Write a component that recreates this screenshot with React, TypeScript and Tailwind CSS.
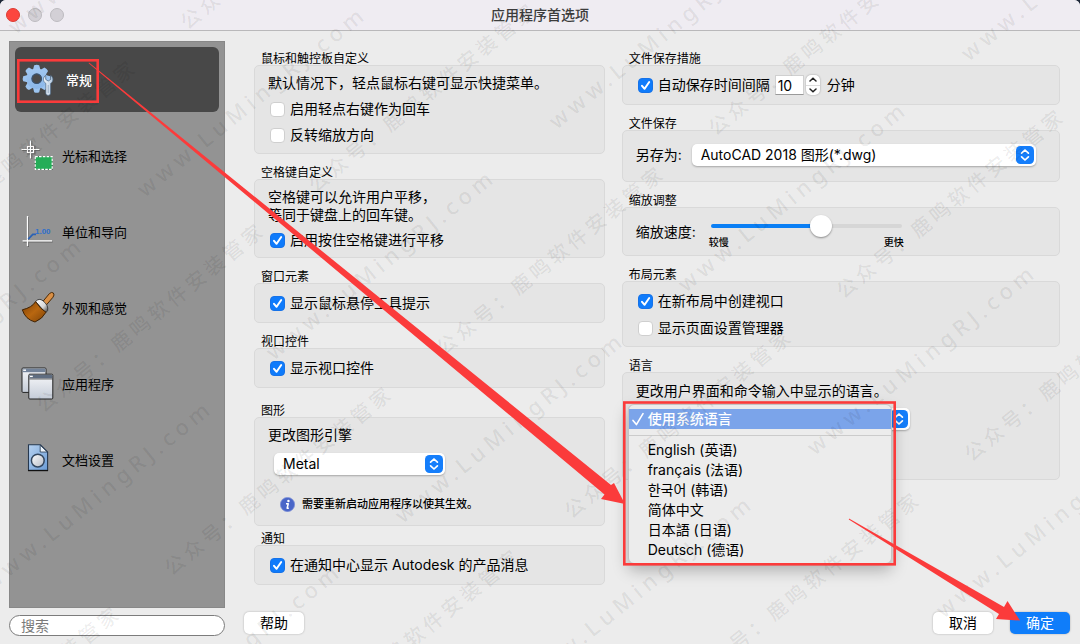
import type { ReactNode } from "react";
import { useId } from "react";

/* ---------- icons ---------- */

function GearIcon() {
  const teeth = [0, 45, 90, 135, 180, 225, 270, 315];
  return (
    <svg viewBox="0 0 32 32" className="size-8 shrink-0" aria-hidden="true">
      <defs>
        <linearGradient id="gear" x1="0" y1="0" x2="0" y2="32" gradientUnits="userSpaceOnUse">
          <stop offset="0" stopColor="#a6cbf3" />
          <stop offset="1" stopColor="#83b1e6" />
        </linearGradient>
        <linearGradient id="wrench" x1="0" y1="0" x2="1" y2="0">
          <stop offset="0" stopColor="#f2f7fc" />
          <stop offset="1" stopColor="#b4c9df" />
        </linearGradient>
      </defs>
      {teeth.map((a) => (
        <path key={a} d="M10.8 6.6 L12.2 1.2 Q14.7 .2 17.2 1.2 L18.6 6.6 Z" fill="#9cc4f0" transform={`rotate(${a} 14.7 14.7)`} />
      ))}
      <circle cx="14.7" cy="14.7" r="7.6" fill="none" stroke="url(#gear)" strokeWidth="5.4" />
      <circle cx="14.7" cy="14.7" r="4.8" fill="#4a4a4a" stroke="#3b5573" strokeWidth="1.2" />
      <path
        d="M23.7 11.4 V15.4 L26.2 17 L28.7 15.4 V11.4 C31.5 13 31.8 17.6 28.6 19.4 V29.3 Q28.6 31.4 26.2 31.4 Q23.8 31.4 23.8 29.3 V19.4 C20.6 17.6 20.9 13 23.7 11.4 Z"
        fill="url(#wrench)"
        stroke="#4b6683"
        strokeWidth=".7"
      />
      <path d="M26.2 21 V29" stroke="#8ea6c0" strokeWidth=".9" />
    </svg>
  );
}

function CursorIcon() {
  return (
    <svg viewBox="0 0 32 32" className="size-8 shrink-0 overflow-visible" aria-hidden="true">
      <path d="M9.2 .8 V19 M.2 10 H18.2 M6 6.8 H12.4 V13.4 H6 Z" fill="none" stroke="#333" strokeWidth="2.2" opacity=".4" />
      <path d="M8.5 .5 V18.5 M-.5 9.5 H17.5" fill="none" stroke="#fff" strokeWidth="1.2" />
      <rect x="5.5" y="6.5" width="6" height="6" fill="none" stroke="#fff" strokeWidth="1.2" />
      <rect x="12.6" y="16" width="18.2" height="14" fill="#222" opacity=".5" />
      <rect x="13.2" y="16.6" width="17" height="12.8" fill="#25ad58" stroke="#fff" strokeWidth="1.2" strokeDasharray="2.6 1.2" />
    </svg>
  );
}

function UnitsIcon() {
  return (
    <svg viewBox="0 0 32 32" className="size-8 shrink-0" aria-hidden="true">
      <path d="M6.5 1 V31 M1.4 26 H30.6" stroke="#444" strokeWidth="1" opacity=".6" />
      <path d="M5.5 0 V30 M.6 24.8 H30" stroke="#fff" strokeWidth="1.3" />
      <path d="M6.2 23.2 L10.8 18.3 H14" fill="none" stroke="#2c62b4" strokeWidth="1.7" />
      <text x="13" y="18.2" fontSize="8" fontWeight="700" fill="#2f6fcb" fontFamily="'Liberation Sans', sans-serif">
        1.00
      </text>
    </svg>
  );
}

function BrushIcon() {
  return (
    <svg viewBox="0 0 32 32" className="size-8 shrink-0 overflow-visible" aria-hidden="true">
      <defs>
        <linearGradient id="bristle" x1="0" y1="0" x2="1" y2="1">
          <stop offset="0" stopColor="#7a3f06" />
          <stop offset=".5" stopColor="#b96710" />
          <stop offset="1" stopColor="#7e4307" />
        </linearGradient>
        <linearGradient id="ferrule" x1="0" y1="0" x2="1" y2="1">
          <stop offset="0" stopColor="#fff" />
          <stop offset=".6" stopColor="#d6d6d6" />
          <stop offset="1" stopColor="#333" />
        </linearGradient>
      </defs>
      <path d="M20 10.5 L27.4 1.6 Q29.6 -.4 31.4 1 Q32.8 2.8 31 5.2 L23.8 13.6 Z" fill="#d98f45" stroke="#4a2a08" strokeWidth="1" />
      <path d="M13.6 9.6 Q17 5.6 21 8.8 Q26.8 13.4 25.6 18.6 L23.6 20.8 Z" fill="url(#ferrule)" stroke="#333" strokeWidth=".9" />
      <path d="M13.6 9.6 Q10 15.6 .3 17.8 Q3.4 27.4 13 30 Q20.4 27 24 20.2 Q18.6 17.4 13.6 9.6 Z" fill="url(#bristle)" stroke="#3f2204" strokeWidth="1" />
    </svg>
  );
}

function WindowsIcon() {
  return (
    <svg viewBox="0 0 32 32" className="size-8 shrink-0 overflow-visible" aria-hidden="true">
      <defs>
        <linearGradient id="pane" x1="0" y1="0" x2="0" y2="1">
          <stop offset="0" stopColor="#f6f7f9" />
          <stop offset="1" stopColor="#c5ccd8" />
        </linearGradient>
      </defs>
      <rect x="0" y="0" width="24" height="24.4" rx="1" fill="url(#pane)" stroke="#222" />
      <rect x=".6" y=".6" width="22.8" height="3.6" fill="#73839a" />
      <path d="M1.2 2.2 H4" stroke="#fff" strokeWidth="1.4" />
      <rect x="6.8" y="6.2" width="24" height="24.8" rx="1" fill="url(#pane)" stroke="#222" />
      <rect x="7.4" y="6.8" width="22.8" height="3.6" fill="#5f6d81" />
      <path d="M8 8.4 H10.8" stroke="#fff" strokeWidth="1.4" />
      <path d="M7.3 11 H30.3" stroke="#333" strokeWidth=".7" />
    </svg>
  );
}

function DocumentIcon() {
  return (
    <svg viewBox="0 0 32 32" className="size-8 shrink-0" aria-hidden="true">
      <defs>
        <linearGradient id="sheet" x1="0" y1="0" x2="1" y2="1">
          <stop offset="0" stopColor="#b7d2f0" />
          <stop offset="1" stopColor="#6b9cd6" />
        </linearGradient>
        <linearGradient id="disc" x1="0" y1="0" x2="1" y2="1">
          <stop offset="0" stopColor="#fff" />
          <stop offset="1" stopColor="#b4bac4" />
        </linearGradient>
      </defs>
      <path d="M6.5 .8 H18.4 L25.6 8 V26.4 H6.5 Z" fill="url(#sheet)" stroke="#26384f" strokeWidth="1.1" />
      <path d="M18.2 1.2 V8 H25.2 Z" fill="#eef5fc" stroke="#26384f" strokeWidth=".8" />
      <path d="M6 26.6 H26" stroke="#111" strokeWidth="1.2" />
      <circle cx="15.8" cy="16.6" r="6.4" fill="url(#disc)" stroke="#33475f" strokeWidth="1.5" />
    </svg>
  );
}

/* ---------- controls ---------- */

function Check({ label, checked = false }: { label: string; checked?: boolean }) {
  const id = useId();
  return (
    <div className="flex h-[18px] items-center gap-[5px] pl-0.5">
      <span className="grid shrink-0">
        <input
          id={id}
          type="checkbox"
          defaultChecked={checked}
          className="peer size-[15px] appearance-none rounded-[4px] border border-[#cfcfcf] bg-white [grid-area:1/1] checked:border-[#1672e8] checked:bg-[#0f7bfb]"
        />
        <svg viewBox="0 0 15 15" className="pointer-events-none hidden size-[15px] [grid-area:1/1] peer-checked:block" aria-hidden="true">
          <path d="M4 7.8 L6.6 10.8 L11.2 4" fill="none" stroke="#fff" strokeWidth="2" strokeLinecap="round" strokeLinejoin="round" />
        </svg>
      </span>
      <label htmlFor={id} className="whitespace-nowrap">
        {label}
      </label>
    </div>
  );
}

function Picker({ label, options, className = "" }: { label: string; options: string[]; className?: string }) {
  return (
    <span className={`grid h-[22px] ${className}`}>
      <select
        aria-label={label}
        className="h-[22px] w-full min-w-0 appearance-none rounded-[5px] bg-white pr-6 pl-[9px] leading-[22px] text-black shadow-[0_1px_2px_rgba(0,0,0,0.28)] [grid-area:1/1]"
      >
        {options.map((o) => (
          <option key={o}>{o}</option>
        ))}
      </select>
      <svg viewBox="0 0 18 18" className="pointer-events-none mr-0.5 size-[18px] self-center justify-self-end [grid-area:1/1]" aria-hidden="true">
        <rect width="18" height="18" rx="4.5" fill="#157efb" />
        <path d="M5.6 7.2 L9 4 L12.4 7.2 M5.6 10.8 L9 14 L12.4 10.8" fill="none" stroke="#fff" strokeWidth="1.7" strokeLinecap="round" strokeLinejoin="round" />
      </svg>
    </span>
  );
}

function Group({ title, className = "", bodyClass, children }: { title: string; className?: string; bodyClass: string; children: ReactNode }) {
  return (
    <section className={className}>
      <h2 className="h-3.5 pl-[7px] text-xs leading-4">{title}</h2>
      <div className={`rounded-[5px] border border-[#d9d9d9] bg-[#e5e5e5] px-[13px] leading-[18px] ${bodyClass}`}>{children}</div>
    </section>
  );
}

/* ---------- sidebar ---------- */

const sections = [
  { name: "常规", icon: <GearIcon />, active: true },
  { name: "光标和选择", icon: <CursorIcon /> },
  { name: "单位和导向", icon: <UnitsIcon /> },
  { name: "外观和感觉", icon: <BrushIcon /> },
  { name: "应用程序", icon: <WindowsIcon /> },
  { name: "文档设置", icon: <DocumentIcon /> },
];

function Sidebar() {
  return (
    <aside className="flex w-54 shrink-0 flex-col gap-[7px] pt-2.5 pb-2">
      <nav className="flex flex-1 flex-col gap-[11px] border border-[#888] bg-[#939393] px-[5px] py-[5px]">
        {sections.map((s) => (
          <button
            key={s.name}
            type="button"
            className={`flex h-[65px] items-center gap-2 rounded-md pl-[7px] text-[13px] ${s.active ? "bg-[#484848] font-medium text-white" : "text-black"}`}
          >
            {s.icon}
            <span className={s.active ? "pt-0.5 pl-1" : "pt-0.5"}>{s.name}</span>
          </button>
        ))}
      </nav>
      <input
        type="search"
        aria-label="搜索"
        placeholder="搜索"
        className="h-[21px] w-full rounded-full border border-[#7c7c7c] bg-white px-[11px] text-sm leading-[19px] placeholder:text-[#7a7a7a]"
      />
    </aside>
  );
}

/* ---------- language menu ---------- */

const languages = ["English (英语)", "français (法语)", "한국어 (韩语)", "简体中文", "日本語 (日语)", "Deutsch (德语)"];

function LanguageMenu() {
  return (
    <div className="absolute -top-1 -left-2 w-[264px] rounded-md border border-[#c4c4c4] bg-[#ececec] pt-1 pb-[3px] shadow-[0_6px_16px_rgba(0,0,0,0.28)]">
      <button type="button" className="flex h-5 w-full items-center gap-1 bg-[#7ba4ea] pl-[3px] font-medium text-white">
        <svg viewBox="0 0 12 14" className="h-3.5 w-3 shrink-0" aria-hidden="true">
          <path d="M1 8.4 L4.4 12.6 L11 1.6" fill="none" stroke="#fff" strokeWidth="1.6" strokeLinecap="round" strokeLinejoin="round" />
        </svg>
        使用系统语言
      </button>
      <hr className="mt-1.5 mb-1 border-[#cbcbcb]" />
      {languages.map((l) => (
        <button key={l} type="button" className="block h-5 w-full pl-[19px] text-left leading-5">
          {l}
        </button>
      ))}
    </div>
  );
}

/* ---------- overlays ---------- */

// Start points of the repeated diagonal marks; each mark climbs up and to the right.
function lattice(x: number, y: number, ax: number, ay: number, bx: number, by: number) {
  const points: { x: number; y: number }[] = [];
  for (let m = -5; m <= 7; m++) {
    for (let n = -4; n <= 5; n++) {
      const px = x + m * ax + n * bx;
      const py = y + m * ay + n * by;
      const inRange = px > -215 && px < 1075 && py > 0 && py < 820;
      const yAtLeftEdge = py + px * 0.8;
      const xAtBottom = px + (py - 644) * 1.24;
      const missesLeft = px < 0 && (yAtLeftEdge < 5 || yAtLeftEdge > 1500);
      const missesBottom = py > 644 && (xAtBottom > 1080 || xAtBottom > px + 210);
      if (inRange && !missesLeft && !missesBottom) points.push({ x: px, y: py });
    }
  }
  return points;
}

const accountMarks = lattice(311, 188, 128, 163, 272, -220);
const siteMarks = lattice(551, 123, 129, 163, 283, -231);

function Watermark() {
  return (
    <div aria-hidden="true" className="pointer-events-none absolute inset-0 overflow-hidden text-black/8 select-none">
      {accountMarks.map((p) => (
        <span
          key={`${p.x},${p.y}`}
          className="absolute -mt-2.5 origin-left -rotate-39 text-xl leading-5 font-medium tracking-[4px] whitespace-nowrap"
          style={{ left: p.x, top: p.y }}
        >
          公众号：鹿鸣软件安装管家
        </span>
      ))}
      {siteMarks.map((p) => (
        <span
          key={`${p.x},${p.y}`}
          className="absolute -mt-2.5 origin-left -rotate-39 font-['Noto_Sans',sans-serif] text-[22px] leading-5 font-medium tracking-[5px] whitespace-nowrap"
          style={{ left: p.x, top: p.y }}
        >
          www.LuMingRJ.com
        </span>
      ))}
    </div>
  );
}

function Annotations() {
  return (
    <svg width="1080" height="644" viewBox="0 0 1080 644" className="pointer-events-none absolute top-0 left-0" aria-hidden="true">
      <g fill="none" stroke="#fb3b3b" strokeWidth="2.6">
        <rect x="18.3" y="60.3" width="79.4" height="41.4" />
        <rect x="624.3" y="402.5" width="270.4" height="161.8" />
      </g>
      <g fill="#fb3b3b">
        <path d="M89 62.5 L611 485 L614 483 L625 504 L601 499 L604.5 494.5 L88.6 63.2 Z" />
        <path d="M849 518.6 L1004 607 L1007.5 601 L1020 620.5 L996 619 L999 614 L848.8 519.6 Z" />
      </g>
    </svg>
  );
}

/* ---------- window ---------- */

export default function App() {
  return (
    <div className="bg-[#1d2738] font-['Inter','Noto_Sans_CJK_SC','Noto_Sans_CJK_KR',sans-serif] text-sm text-black">
      <div className="relative flex min-h-screen flex-col overflow-hidden rounded-t-md bg-[#ececec]">
        <header className="grid h-[31px] grid-cols-[1fr_auto_1fr] items-center border-b border-[#b9b8ba] bg-[#efecf2] px-1.5">
          <div className="flex gap-2">
            <button type="button" aria-label="关闭" className="size-3.5 rounded-full border border-[#dd3c34] bg-[#fc463f]" />
            <button type="button" aria-label="最小化" className="size-3.5 rounded-full border border-[#bdbbc0] bg-[#d3d0d6]" />
            <button type="button" aria-label="缩放" className="size-3.5 rounded-full border border-[#bdbbc0] bg-[#d3d0d6]" />
          </div>
          <h1 className="leading-[28px] font-medium text-[#3c3c3c]">应用程序首选项</h1>
        </header>

        <div className="flex flex-1 pr-2.5 pl-[9px]">
          <Sidebar />

          <main className="ml-[19px] flex min-w-0 flex-1 flex-col pt-5 pb-2.5">
            <div className="grid grid-cols-[4fr_5fr] gap-[17px] px-2.5">
              <div className="flex flex-col gap-[11px]">
                <Group title="鼠标和触控板自定义" bodyClass="flex flex-col gap-2 pt-2 pb-[9px]">
                  <p className="whitespace-nowrap">默认情况下，轻点鼠标右键可显示快捷菜单。</p>
                  <Check label="启用轻点右键作为回车" />
                  <Check label="反转缩放方向" />
                </Group>
                <Group title="空格键自定义" bodyClass="flex flex-col gap-[7px] pt-2 pb-2">
                  <p>
                    空格键可以允许用户平移，
                    <br />
                    等同于键盘上的回车键。
                  </p>
                  <Check label="启用按住空格键进行平移" checked />
                </Group>
                <Group title="窗口元素" bodyClass="py-2.5">
                  <Check label="显示鼠标悬停工具提示" checked />
                </Group>
                <Group title="视口控件" bodyClass="py-2.5">
                  <Check label="显示视口控件" checked />
                </Group>
                <div className="flex flex-col gap-[5px] pt-1">
                  <Group title="图形" bodyClass="flex flex-col pt-2 pb-3">
                    <p>更改图形引擎</p>
                    <Picker label="图形引擎" options={["Metal"]} className="mt-[9px] ml-1.5 w-[171px]" />
                    <p className="mt-5 flex items-center gap-[7px] pl-3 text-[11px] font-medium">
                      <svg viewBox="0 0 16 16" className="size-[15px] shrink-0" aria-hidden="true">
                        <circle cx="8" cy="8" r="7.6" fill="#4a66c8" stroke="#7d90d8" strokeWidth=".8" />
                        <circle cx="9" cy="4.2" r="1.3" fill="#fff" />
                        <path d="M6.4 7.2 H8.8 L7.6 12 H9.4" fill="none" stroke="#fff" strokeWidth="1.6" strokeLinejoin="round" />
                      </svg>
                      需要重新启动应用程序以使其生效。
                    </p>
                  </Group>
                  <Group title="通知" bodyClass="py-2.5">
                    <Check label="在通知中心显示 Autodesk 的产品消息" checked />
                  </Group>
                </div>
              </div>

              <div className="flex flex-col gap-[11px]">
                <Group title="文件保存措施" bodyClass="flex items-center py-[9px]">
                  <Check label="自动保存时间间隔" checked />
                  <input
                    type="text"
                    inputMode="numeric"
                    aria-label="自动保存时间间隔（分钟）"
                    defaultValue="10"
                    className="ml-[5px] h-5 w-[29px] border border-[#d0d0d0] border-b-[#9a9a9a] bg-white px-0.5"
                  />
                  <span className="ml-0.5 flex h-5 w-3.5 flex-col overflow-hidden rounded-[5px] bg-white shadow-[0_0_2px_rgba(0,0,0,0.35)]">
                    <button type="button" aria-label="增加" className="grid flex-1 place-items-center border-b border-[#ddd]">
                      <svg viewBox="0 0 8 5" className="h-[5px] w-2" aria-hidden="true">
                        <path d="M1 4 L4 1.2 L7 4" fill="none" stroke="#222" strokeWidth="1.5" strokeLinecap="round" />
                      </svg>
                    </button>
                    <button type="button" aria-label="减少" className="grid flex-1 place-items-center">
                      <svg viewBox="0 0 8 5" className="h-[5px] w-2" aria-hidden="true">
                        <path d="M1 1 L4 3.8 L7 1" fill="none" stroke="#222" strokeWidth="1.5" strokeLinecap="round" />
                      </svg>
                    </button>
                  </span>
                  <span className="ml-[7px]">分钟</span>
                </Group>
                <Group title="文件保存" bodyClass="flex items-center pt-[13px] pb-[15px] pr-[23px]">
                  <span className="w-14 shrink-0">另存为:</span>
                  <Picker label="另存为" options={["AutoCAD 2018 图形(*.dwg)"]} className="flex-1" />
                </Group>
                <Group title="缩放调整" bodyClass="flex items-center pt-[7px] pb-[7px]">
                  <label htmlFor="zoom-speed" className="w-[75px] shrink-0">
                    缩放速度:
                  </label>
                  <div className="w-[191px]">
                    <input
                      id="zoom-speed"
                      type="range"
                      defaultValue={59}
                      className="block h-[22px] w-full appearance-none bg-transparent [&::-webkit-slider-runnable-track]:h-1 [&::-webkit-slider-runnable-track]:rounded-full [&::-webkit-slider-runnable-track]:bg-[linear-gradient(to_right,#0a7ff5_58%,#d6d6d6_58%)] [&::-webkit-slider-thumb]:-mt-[9px] [&::-webkit-slider-thumb]:size-[22px] [&::-webkit-slider-thumb]:appearance-none [&::-webkit-slider-thumb]:rounded-full [&::-webkit-slider-thumb]:bg-white [&::-webkit-slider-thumb]:shadow-[0_1px_2px_rgba(0,0,0,0.4)]"
                    />
                    <div className="-mx-0.5 flex justify-between text-[10px] leading-[11px] font-medium">
                      <span>较慢</span>
                      <span>更快</span>
                    </div>
                  </div>
                </Group>
                <Group title="布局元素" bodyClass="flex flex-col gap-[9px] pt-2.5 pb-[9px]">
                  <Check label="在新布局中创建视口" checked />
                  <Check label="显示页面设置管理器" />
                </Group>
                <Group title="语言" bodyClass="pt-[9px] pb-[49px]">
                  <p>更改用户界面和命令输入中显示的语言。</p>
                  <div className="relative mt-2 w-[274px]">
                    <Picker label="语言" options={["使用系统语言", ...languages]} />
                    <LanguageMenu />
                  </div>
                </Group>
              </div>
            </div>

            <footer className="mt-auto flex leading-[22px]">
              <button type="button" className="h-[22px] w-15 rounded-[5px] bg-white shadow-[0_0_2px_rgba(0,0,0,0.3)]">
                帮助
              </button>
              <button type="button" className="mr-[17px] ml-auto h-[22px] w-15 rounded-[5px] bg-white shadow-[0_0_2px_rgba(0,0,0,0.3)]">
                取消
              </button>
              <button type="button" className="h-[22px] w-15 rounded-[5px] bg-[#0f7dfa] text-white shadow-[0_0_2px_rgba(0,0,0,0.3)]">
                确定
              </button>
            </footer>
          </main>
        </div>

        <Watermark />
        <Annotations />
      </div>
    </div>
  );
}
